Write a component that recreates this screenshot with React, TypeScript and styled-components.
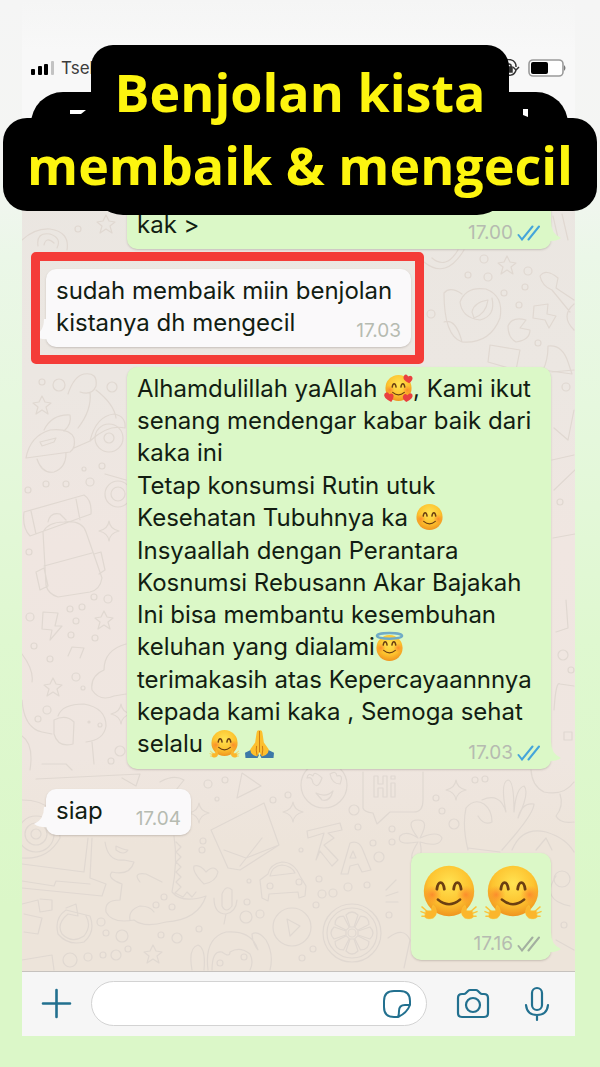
import React from "react";
import styled, { createGlobalStyle } from "styled-components";

const GlobalStyle = createGlobalStyle`
  *, *::before, *::after { box-sizing: border-box; }
  body { margin: 0; font-family: Inter, "Liberation Sans", sans-serif; }
  h1, p { margin: 0; font-weight: inherit; }
  button { font: inherit; }
`;

const Page = styled.div`
  position: relative;
  min-height: 100vh;
  display: flex;
  flex-direction: column;
  padding: 0 25px 31px 22px;
  overflow: hidden;
  background: linear-gradient(
    180deg, #f5f5f5 0, #f4f5f3 15%, #ebf7e8 24%, #e6f8de 38%, #dff8d0 60%, #dbf7c8 85%, #dbf7c8 100%
  );
`;

/* Caption laid over the top of the chat */
const Caption = styled.h1`
  position: absolute;
  z-index: 2;
  top: 45px;
  left: 0;
  right: 0;
  display: flex;
  flex-direction: column;
  align-items: center;
  color: #fdf50f;
  font-family: "Open Sans", sans-serif;
  font-weight: 700;
  font-size: 52px;
  line-height: 68px;
  white-space: nowrap;

  &::before {
    content: "";
    position: absolute;
    z-index: -1;
    top: 47px;
    left: 31px;
    right: 32px;
    height: 64px;
    border-radius: 32px;
    background: #000;
  }
`;

const CaptionTop = styled.span`
  padding: 13px 24px 89px;
  border-radius: 22px 22px 32px 32px;
  background: #000;
`;

/* Keeps the descenders of the first line above the second pill */
const CaptionText = styled.span`
  position: relative;
  z-index: 1;
`;

const CaptionBottom = styled.span`
  margin-top: -97px;
  padding: 13px 24px 12px;
  border-radius: 24px;
  background: #000;
`;

const HeaderMarks = styled.svg`
  position: absolute;
  top: 63px;
  left: 70px;
  width: calc(100% - 142px);
  height: 12px;
  overflow: visible;
`;

const StatusBar = styled.header`
  display: flex;
  align-items: center;
  justify-content: space-between;
  height: 120px;
  padding: 15px 8px 0;
  background: linear-gradient(180deg, transparent, #f8f8f8 50px, #f8f8f8);
  font-size: 17px;
  line-height: 24px;
  color: #3c3c3c;

  svg { display: block; }
`;

const StatusGroup = styled.div`
  display: flex;
  align-items: center;
  gap: 6px;
`;

const Chat = styled.main`
  position: relative;
  flex: 1;
  display: flex;
  flex-direction: column;
  padding: 12px 24px 11px;
  background: linear-gradient(180deg, #eae6e1 0, #ece7e2 30%, #f0e6e1 50%, #efe6e0 75%, #ede4da 85%, #ede4da 100%);
  isolation: isolate;
`;

const Wallpaper = styled.svg`
  position: absolute;
  z-index: -1;
  inset: 0;
  width: 100%;
  height: 100%;
`;

const Bubble = styled.article<{ $mine?: boolean }>`
  position: relative;
  align-self: ${(p) => (p.$mine ? "flex-end" : "flex-start")};
  padding: 6px 10px 8px;
  border-radius: 10px;
  background: ${(p) => (p.$mine ? "#dbf8c7" : "#faf9fa")};
  box-shadow: 0 1px 2px rgba(90, 80, 70, 0.25);
  color: #121d12;
  font-size: 24px;
  line-height: 32px;

  p + p { margin-top: 1px; }
`;

const EarlierBubble = styled(Bubble)`
  width: 424px;
  max-width: 100%;
  padding-top: 77px;
`;

const ReplyBubble = styled(Bubble)`
  width: 424px;
  max-width: 100%;
  margin-bottom: 20px;
  padding-bottom: 9px;
`;

const ShortBubble = styled(Bubble)`
  width: 145px;
  margin-bottom: 18px;
`;

const EmojiBubble = styled(Bubble)`
  display: flex;
  gap: 8px;
  padding: 11px 10px 40px;
`;

const Highlight = styled.section`
  align-self: flex-start;
  width: 393px;
  max-width: 100%;
  margin: 3px 0 3px -15px;
  padding: 8px 4px 8px 6px;
  border: 9px solid #f43c38;
  border-radius: 5px;
  overflow: hidden;
`;

const Tail = styled.svg<{ $mine?: boolean }>`
  position: absolute;
  bottom: 4px;
  ${(p) => (p.$mine ? "right: -10px;" : "left: -12px; transform: scaleX(-1);")}
  width: 16px;
  height: 24px;
`;

const Meta = styled.footer`
  position: absolute;
  right: 10px;
  bottom: 6px;
  display: flex;
  align-items: center;
  gap: 4px;
  color: #b6bbb1;
  font-size: 19px;
  line-height: 20px;
`;

const EmojiSvg = styled.svg<{ $size: number }>`
  display: inline-block;
  width: ${(p) => p.$size}px;
  height: ${(p) => p.$size}px;
  vertical-align: -6px;
  overflow: visible;
`;

const Composer = styled.form`
  display: flex;
  align-items: center;
  height: 65px;
  padding: 0 25px 1px 19px;
  border-top: 1px solid #c6c2be;
  background: #f6f6f6;
`;

const IconButton = styled.button`
  display: flex;
  padding: 0;
  border: 0;
  background: none;
  color: #22708f;
  cursor: pointer;
`;

const Field = styled.div`
  display: flex;
  align-items: center;
  flex: 1;
  min-width: 0;
  height: 45px;
  margin: 0 29px 0 19px;
  padding: 0 14px 0 20px;
  border: 1px solid #d3d3d3;
  border-radius: 23px;
  background: #fff;
`;

const TextInput = styled.input`
  flex: 1;
  min-width: 0;
  border: 0;
  outline: 0;
  background: transparent;
  font: inherit;
  font-size: 20px;
`;

const MicButton = styled(IconButton)`
  margin-left: 34px;
`;

type Mood = "hearts" | "smile" | "halo" | "hug" | "pray";

const moodNames: Record<Mood, string> = {
  hearts: "🥰",
  smile: "😊",
  halo: "😇",
  hug: "🤗",
  pray: "🙏",
};

const Hand = () => (
  <g fill="#fbb62c" stroke="#fbc43a" strokeLinecap="round">
    <path strokeWidth="1.6" d="M8 52 L1 46 M8 54 L0 51 M8 56 L1 56" fill="none" />
    <path strokeWidth="1.6" d="M13 52 L13 45" fill="none" />
    <path strokeWidth=".5" d="M5 50 L11 50 Q12 43 15 46 Q19 54 13 58 Q7 60 4 57Z" />
  </g>
);

function Emoji({ mood, size = 29 }: { mood: Mood; size?: number }) {
  const id = `${mood}-${size}`;
  if (mood === "pray") {
    return (
      <EmojiSvg $size={size} viewBox="0 0 60 60" role="img" aria-label={moodNames.pray}>
        <path fill="#3c79a8" d="M0 49 L17 41 L29 54 L26 60 H1Z M60 49 L43 41 L31 54 L34 60 H59Z" />
        <path fill="#fdbf2d" d="M29 3 Q25 1 24 8 L21 28 L11 42 Q10 48 17 54 L25 57 L30 48 L35 57 L43 54 Q50 48 49 42 L39 28 L36 8 Q35 1 31 3Z" />
        <path fill="none" stroke="#c97a13" strokeWidth="2" d="M30 4 V48 M24 35 Q22 42 25 55 M36 35 Q38 42 35 55" />
      </EmojiSvg>
    );
  }
  return (
    <EmojiSvg $size={size} viewBox="0 0 60 60" role="img" aria-label={moodNames[mood]}>
      <defs>
        <radialGradient id={id} cx=".5" cy=".35" r=".68">
          <stop offset="0" stopColor="#ffe352" />
          <stop offset=".6" stopColor="#fdc32f" />
          <stop offset="1" stopColor="#ee8e1d" />
        </radialGradient>
        <radialGradient id={`${id}-blush`}>
          <stop offset="0" stopColor="#fb7a2b" stopOpacity=".75" />
          <stop offset="1" stopColor="#fb8a2b" stopOpacity="0" />
        </radialGradient>
      </defs>
      <circle cx="30" cy={mood === "halo" ? 33 : 29} r="27" fill={`url(#${id})`} />
      <circle cx="12" cy="33" r="10" fill={`url(#${id}-blush)`} />
      <circle cx="48" cy="33" r="10" fill={`url(#${id}-blush)`} />
      <path
        fill="none"
        stroke="#6b3f12"
        strokeWidth="3"
        strokeLinecap="round"
        d="M17 27 Q18 20 21 20 Q24 20 25 27 M35 27 Q36 20 39 20 Q42 20 43 27"
      />
      <path fill="none" stroke="#6b3f12" strokeWidth="2.6" strokeLinecap="round" d="M18 38 Q30 48 42 38" />
      {mood === "halo" && (
        <ellipse cx="30" cy="8" rx="26" ry="6" fill="none" stroke="#70abc6" strokeWidth="5" />
      )}
      {mood === "hearts" && (
        <g fill="#e9403f">
          <path d="M52 19 Q37 12 41 4 Q46 -2 50 5 Q57 1 59 8 Q60 13 52 19Z" />
          <path d="M15 58 Q-3 49 1 41 Q7 34 11 42 Q18 38 20 45 Q20 51 15 58Z" />
          <path d="M46 58 Q36 50 40 44 Q44 39 48 44 Q56 36 59 43 Q61 51 46 58Z" />
        </g>
      )}
      {mood === "hug" && (
        <>
          <Hand />
          <g transform="translate(60 0) scale(-1 1)"><Hand /></g>
        </>
      )}
    </EmojiSvg>
  );
}

function Checks({ color }: { color: string }) {
  return (
    <svg width="24" height="16" viewBox="0 0 24 16" fill="none" stroke={color} strokeWidth="2" strokeLinecap="round" aria-hidden="true">
      <path d="M1.500 10 L5 14.500 L15.500 1.500 M11.500 14.500 L22 1.500" />
    </svg>
  );
}

function BubbleTail({ mine }: { mine?: boolean }) {
  return (
    <Tail $mine={mine} viewBox="0 0 16 24" aria-hidden="true">
      <path d="M0 0 H6 Q6 13 16 17 Q10 21 0 20Z" fill={mine ? "#dbf8c7" : "#faf9fa"} />
    </Tail>
  );
}

function Stamp({ time, checks }: { time: string; checks?: string }) {
  return (
    <Meta>
      <time>{time}</time>
      {checks && <Checks color={checks} />}
    </Meta>
  );
}

const STAR = "M0 -9 L3 -3 L9 -2 L4 2 L6 9 L0 5 L-6 9 L-4 2 L-9 -2 L-3 -3Z";
const SPARK = "M0 -10 Q1 -2 10 0 Q1 2 0 10 Q-1 2 -10 0 Q-1 -2 0 -10Z";

const stars = [[106, 224], [42, 405], [104, 620], [53, 687], [507, 265], [153, 954], [290, 225]];
const sparks = [[109, 531], [199, 813], [293, 812], [456, 790], [121, 714]];
const dots: [number, number, number][] = [
  [78, 229, 3], [59, 385, 6], [112, 387, 5], [42, 382, 3], [102, 466, 3], [84, 469, 2], [46, 484, 3], [66, 484, 3], [90, 482, 4],
  [28, 490, 3], [29, 552, 3], [94, 597, 3], [108, 599, 4], [70, 609, 3], [82, 607, 3], [76, 621, 3], [30, 617, 4], [34, 646, 3],
  [71, 635, 3], [95, 638, 3], [50, 659, 3], [76, 677, 4], [83, 688, 2], [47, 710, 4], [38, 719, 3], [120, 751, 5], [111, 761, 3],
  [484, 259, 4], [528, 271, 4], [468, 275, 3], [488, 277, 4], [525, 287, 3], [504, 293, 3], [519, 305, 3], [431, 314, 4],
  [538, 343, 3], [566, 387, 4], [560, 502, 3], [563, 655, 5], [571, 670, 3], [475, 780, 3], [485, 779, 3], [436, 798, 3],
  [442, 811, 3], [454, 824, 5], [392, 829, 3], [208, 784, 4], [217, 799, 2], [225, 780, 3], [273, 800, 3], [288, 795, 3],
  [354, 810, 5], [203, 841, 3], [202, 850, 3], [301, 850, 2], [358, 827, 3], [373, 843, 3], [392, 842, 3], [379, 857, 5],
  [249, 881, 2], [319, 879, 3], [348, 887, 4], [367, 885, 3], [322, 894, 4], [333, 893, 4], [164, 897, 3], [156, 905, 3],
  [172, 907, 3], [247, 902, 3], [246, 917, 6], [260, 914, 4], [101, 922, 4], [106, 933, 3], [122, 936, 6], [161, 935, 3],
  [177, 938, 5], [199, 929, 3], [70, 960, 7], [88, 957, 4], [103, 955, 3], [116, 955, 5], [313, 949, 3], [302, 958, 3],
  [128, 949, 3], [562, 879, 8], [564, 925, 3], [316, 905, 3], [389, 915, 3],
];

const Doodles = () => (
  <Wallpaper viewBox="22 120 553 851" preserveAspectRatio="xMinYMin slice" aria-hidden="true">
    <g fill="none" stroke="#e0d8d1" strokeWidth="1.200" strokeLinejoin="round" strokeLinecap="round">
      {stars.map(([x, y]) => <path key={`${x}-${y}`} d={STAR} transform={`translate(${x} ${y})`} />)}
      {sparks.map(([x, y]) => <path key={`${x}-${y}`} d={SPARK} transform={`translate(${x} ${y})`} />)}
      {dots.map(([x, y, r]) => <circle key={`${x}-${y}`} cx={x} cy={y} r={r} />)}
      {/* snail and dog by the first messages */}
      <path d="M22 240 Q35 228 50 229 Q70 232 67 250 M38 246 Q36 232 50 234 Q62 238 57 248 M44 245 Q46 236 54 243" />
      <path d="M68 394 Q74 376 84 374 Q98 372 96 386 Q92 396 80 392 M90 392 Q92 410 78 428 M96 390 Q114 404 116 418" />
      {/* scooter */}
      <path d="M26 458 Q30 436 50 430 Q70 428 74 438 Q76 448 70 452 Z M44 430 Q52 414 70 415 Q72 424 64 431 M40 442 L56 438 L54 442 L42 446Z M37 459 Q42 474 54 472 Q66 468 66 453 M74 448 L90 441 Q96 416 114 414 Q126 416 125 428 Q108 424 90 441" />
      <circle cx="109" cy="438" r="14" /><circle cx="109" cy="438" r="5" />
      {/* backpack */}
      <path d="M24 512 L84 495 Q92 500 91 514 L30 536 Q22 528 24 512Z M31 511 L36 534 M76 499 L80 520 M48 522 Q50 512 60 514 L66 520 M43 532 Q48 522 64 522 Q82 520 86 532 L102 578 Q100 590 90 592 L58 597 Q48 594 46 585 Z M44 566 L92 553 M36 572 L44 568 L48 586 L40 590Z M94 554 L101 552 L105 570 L99 574" />
      {/* medal, bolt, notes, cloud */}
      <circle cx="118" cy="494" r="13" /><circle cx="118" cy="494" r="7" />
      <path d="M105 474 L126 480 M43 612 L58 613 L55 626 L62 626 L50 640 L52 630 L42 629Z M68 656 L72 647 L84 648 L80 658 M126 644 Q104 650 104 670 Q90 676 92 690 Q100 702 114 696 L126 694 M22 654 Q34 670 32 682 M22 700 Q24 728 42 732 L52 734" />
      {/* puppy */}
      <path d="M58 716 Q62 704 84 704 Q106 708 106 726 Q104 740 86 742 M54 720 Q66 714 74 722 L73 744 Q58 748 54 734Z M92 742 L94 764 M42 764 L48 764 L66 764 L72 770 M22 736 Q34 744 30 770" />
      <circle cx="89" cy="722" r="1" /><circle cx="100" cy="725" r="2" />
      {/* bird and shapes at the right edge */}
      <path d="M444 293 Q450 286 462 294 M444 293 Q444 336 462 342 Q490 344 500 318 Q504 296 486 289 Q466 286 460 302 Q462 318 480 320 Q496 316 492 298 M444 322 Q456 318 462 342 M472 312 Q474 302 488 300 Q486 314 474 318Z" />
      <path d="M424 262 Q446 280 464 250 M432 258 Q446 270 458 250 M540 276 Q546 268 558 278 L556 288 L574 300 M540 276 Q542 286 552 290 L570 312 M534 306 L548 304 L547 314 L556 316 L549 328 L545 320 L533 318Z M508 326 Q512 316 526 320 L520 328 L530 330 Q530 340 516 342 Q508 338 508 326Z M490 345 L520 350 L516 370 L488 362Z M548 346 Q562 344 568 362 L572 374 L543 370 Q548 360 548 346Z M553 216 L558 238 M562 214 L568 240 M574 304 Q560 316 574 330" />
      <path d="M552 372 L574 370 M554 428 L568 440 L574 410 M552 460 L574 455 M554 490 L575 470 M553 538 L575 534 M556 632 L568 628 L566 600 M554 710 Q556 680 560 684 L574 686 M564 732 h8 v8 h-8Z" />
      {/* cat, rocket, smiley and envelope */}
      <path d="M36 779 L140 774 L136 786 L122 778 M160 782 Q174 774 184 780 L176 790 M237 798 L242 773 L261 786Z M211 830 L264 803 L279 845 L240 870 L228 868Z M224 850 L246 858 L279 845 M240 866 L262 838" />
      <circle cx="324" cy="785" r="23" />
      <path d="M307 778 Q312 776 313 783 Q318 790 322 778 Q314 770 313 776 Q308 772 307 778Z M330 774 Q336 770 337 776 Q344 774 340 784 Q332 784 330 774Z M316 793 Q326 798 333 791 Q330 802 322 800Z M363 772 V808 Q364 812 373 813 L377 824 L390 812 H414 Q423 812 423 800 V772" />
      {/* greeting inside the speech balloon */}
      <path d="M374 776 V797 H378 V788 H383 V797 H387 V776 H383 V784 H378 V776Z M391 783 V797 H395 V783Z M391 776 V779 H395 V776Z" />
      {/* hand and clover */}
      <path d="M468 850 Q462 826 466 808 Q474 798 484 804 Q492 810 492 822 Q484 826 478 816 M482 800 Q500 792 506 812 Q500 782 508 780 Q514 780 514 812 Q516 788 524 786 Q530 792 518 818 Q522 802 534 804 Q534 812 514 836 L502 850 M468 848 L500 852 M418 842 Q396 846 400 836 Q406 830 418 838 Q404 820 418 820 Q430 820 420 838 Q438 830 442 838 Q440 848 420 842 Q424 860 414 860 Q408 858 418 842" />
      <path d="M531 770 Q532 786 544 792 Q564 796 574 782 M560 794 Q564 806 556 816 Q560 824 574 822 M512 850 Q522 826 546 832 Q566 838 574 852 M536 850 L546 838 L552 850" />
      {/* laptop */}
      <path d="M22 800 Q60 800 60 838 Q48 860 22 858 M88 838 L84 872 L22 864 M92 838 L90 878 L106 884 L102 896 L22 888 M22 881 L54 886 L56 881 L90 884" />
      <circle cx="36" cy="834" r="18" /><circle cx="36" cy="834" r="11" /><circle cx="36" cy="834" r="5" />
      {/* dragon */}
      <path d="M105 842 Q108 862 124 860 L134 862 Q130 876 112 872 Q106 878 122 884 L120 900 Q104 900 106 912 Q112 924 134 920 Q144 928 166 922 Q198 920 206 896 Q182 904 172 892 Q178 862 174 836 M130 920 Q128 910 140 906 Q150 906 154 912 M140 882 Q132 872 146 874 L162 882 M116 846 Q124 850 128 850 Q124 856 116 850Z M176 842 l5 5 l-5 5 l5 5 l-5 5 l5 5 l-5 5 l5 5 l-5 5 l5 5 l-6 6 l8 4 l4 -5 l5 5 l4 -5" />
      {/* heart, microphone and car */}
      <path d="M204 884 Q192 872 194 866 Q200 864 206 872 Q214 864 218 872 Q216 882 204 884Z M222 906 V894 Q226 884 232 890 V906 Q226 914 222 906Z M214 898 Q214 914 226 914 Q236 912 237 900 M226 914 L224 924" />
      <path d="M262 898 L260 880 L268 874 Q270 864 282 862 Q294 862 300 876 L306 886 L305 896 L299 898 L298 892 L269 894 L268 901Z M270 876 Q272 866 282 865 Q292 866 295 873Z" />
      <circle cx="270" cy="886" r="3" /><circle cx="299" cy="882" r="3" />
      {/* language symbols */}
      <path d="M307 831 L340 823 L342 830 L328 833 L334 838 L324 845 L338 860 L332 866 L320 851 L316 860 L324 833 L308 838Z M350 843 Q358 840 362 848 L371 870 L362 872 L358 864 L350 866 L348 874 L341 874Z M353 851 L356 858 L350 858Z" />
      {/* puzzle, reload, play, citrus */}
      <path d="M22 904 L38 900 L40 912 L52 910 L52 900 L40 899 M24 914 L42 918 L38 934 L24 932 M66 908 L76 904 L78 916 L68 914 Q56 924 62 934 Q72 944 84 936 Q92 926 86 916 M90 916 Q96 932 84 942 Q68 946 58 934 Q54 918 66 910Z" />
      <circle cx="292" cy="927" r="19" /><path d="M287 919 L300 926 L290 936Z" />
      <circle cx="352" cy="933" r="29" /><circle cx="352" cy="933" r="25" /><circle cx="352" cy="933" r="4" />
      {[0, 45, 90, 135, 180, 225, 270, 315].map((a) => (
        <path key={a} transform={`rotate(${a} 352 933)`} d="M350 927 L346 915 Q352 909 358 915 L354 927Z" />
      ))}
      {/* penguin and odds along the bottom */}
      <path d="M192 970 Q188 948 198 945 Q206 948 204 970 M208 970 Q204 938 226 932 Q252 930 258 950 Q252 942 252 934 Q258 930 266 940 Q274 954 270 970 M212 970 Q212 950 222 952 Q230 958 230 952 Q240 946 250 954 Q254 962 250 970 M22 960 L52 955 L54 970 M386 890 L396 880 M386 896 L398 892 M386 902 L398 902 M388 938 Q404 926 410 940 L404 968 M556 876 Q540 900 570 906 M556 940 L574 950" />
      <circle cx="220" cy="963" r="3" /><circle cx="244" cy="957" r="3" />
    </g>
  </Wallpaper>
);

export default function App() {
  return (
    <Page>
      <GlobalStyle />
      <Caption>
        <CaptionTop><CaptionText>Benjolan kista</CaptionText></CaptionTop>
        <CaptionBottom>membaik &amp; mengecil</CaptionBottom>
        <HeaderMarks aria-hidden="true">
          <path d="M0 2 H16 L11 6 H0Z" fill="#fff" />
          <svg x="100%" overflow="visible"><path d="M-5 1 H0 V9 L-5 7Z" fill="#fff" /></svg>
        </HeaderMarks>
      </Caption>
      <StatusBar>
        <StatusGroup>
          <svg width="25" height="16" viewBox="0 0 25 16" aria-hidden="true">
            <rect x="1" y="9" width="4" height="6" rx="1" />
            <rect x="8" y="6" width="4" height="9" rx="1" />
            <rect x="14" y="4" width="4" height="11" rx="1" />
            <rect x="21" y="1" width="3" height="14" rx="1" fill="#c3c3c3" />
          </svg>
          <span>Tsel</span>
        </StatusGroup>
        <StatusGroup>
          <svg width="18" height="18" viewBox="0 0 18 18" fill="none" stroke="#333" strokeWidth="1.500" aria-hidden="true">
            <path d="M1 4 A7 7 0 0 1 14 8 M14 11 A7 7 0 0 1 2 14 M11 8 L14 11 L17 8" />
            <rect x="3" y="8" width="7" height="5" fill="#333" />
            <path d="M5 8 V6 Q7 4 9 6 V8" />
          </svg>
          <svg width="41" height="20" viewBox="0 0 41 20" aria-hidden="true">
            <rect x="3" y="2" width="34" height="16" rx="4" fill="#fff" stroke="#9a9a9a" strokeWidth="1.600" />
            <rect x="5" y="4" width="17" height="12" rx="2" />
            <path d="M38 7 Q41 10 38 13Z" fill="#777" />
          </svg>
        </StatusGroup>
      </StatusBar>
      <Chat>
        <Doodles />
        <EarlierBubble $mine>
          <BubbleTail mine />
          <p>kak &gt;</p>
          <Stamp time="17.00" checks="#45a5da" />
        </EarlierBubble>
        <Highlight>
          <Bubble>
            <BubbleTail />
            <p>sudah membaik miin benjolan<br />kistanya dh mengecil</p>
            <Stamp time="17.03" />
          </Bubble>
        </Highlight>
        <ReplyBubble $mine>
          <BubbleTail mine />
          <p>
            Alhamdulillah yaAllah <Emoji mood="hearts" />, Kami ikut<br />
            senang mendengar kabar baik dari<br />
            kaka ini
          </p>
          <p>
            Tetap konsumsi Rutin utuk<br />
            Kesehatan Tubuhnya ka <Emoji mood="smile" />
          </p>
          <p>
            Insyaallah dengan Perantara<br />
            Kosnumsi Rebusann Akar Bajakah<br />
            Ini bisa membantu kesembuhan<br />
            keluhan yang dialami<Emoji mood="halo" />
          </p>
          <p>
            terimakasih atas Kepercayaannnya<br />
            kepada kami kaka , Semoga sehat<br />
            selalu <Emoji mood="hug" /> <Emoji mood="pray" />
          </p>
          <Stamp time="17.03" checks="#45a5da" />
        </ReplyBubble>
        <ShortBubble>
          <BubbleTail />
          <p>siap</p>
          <Stamp time="17.04" />
        </ShortBubble>
        <EmojiBubble $mine>
          <BubbleTail mine />
          <Emoji mood="hug" size={56} />
          <Emoji mood="hug" size={56} />
          <Stamp time="17.16" checks="#a3afa0" />
        </EmojiBubble>
      </Chat>
      <Composer onSubmit={(e) => e.preventDefault()}>
        <IconButton type="button" aria-label="Lampirkan">
          <svg width="31" height="31" viewBox="0 0 31 31" stroke="currentColor" strokeWidth="2.600" strokeLinecap="round">
            <path d="M15.500 2 V29 M2 15.500 H29" />
          </svg>
        </IconButton>
        <Field>
          <TextInput type="text" aria-label="Pesan" />
          <IconButton type="button" aria-label="Stiker">
            <svg width="30" height="30" viewBox="0 0 30 30" fill="none" stroke="currentColor" strokeWidth="2" strokeLinejoin="round">
              <path d="M16 28 H12 Q2 28 2 18 V12 Q2 2 12 2 H18 Q28 2 28 12 V16 Q25 24 16 28 Q17 26 17 22 Q17 16 23 16 H28" />
            </svg>
          </IconButton>
        </Field>
        <IconButton type="button" aria-label="Kamera">
          <svg width="34" height="32" viewBox="0 0 34 32" fill="none" stroke="currentColor" strokeWidth="2.200" strokeLinejoin="round">
            <path d="M6 6 H8 Q9 6 10 5 L12 3 Q13 2 14 2 H20 Q21 2 22 3 L24 5 Q25 6 26 6 H28 Q32 6 32 10 V25 Q32 29 28 29 H6 Q2 29 2 25 V10 Q2 6 6 6Z" />
            <circle cx="17" cy="17" r="7" />
          </svg>
        </IconButton>
        <MicButton type="button" aria-label="Rekam suara">
          <svg width="26" height="36" viewBox="0 0 26 36" fill="none" stroke="currentColor" strokeWidth="2.200" strokeLinecap="round">
            <rect x="8" y="2" width="10" height="22" rx="5" />
            <path d="M2 19 Q3 29 13 29 Q23 29 24 19 M13 29 V34" />
          </svg>
        </MicButton>
      </Composer>
    </Page>
  );
}
